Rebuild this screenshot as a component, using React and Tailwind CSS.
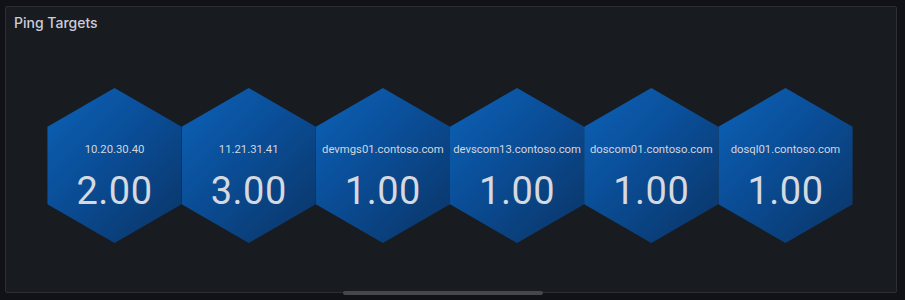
import React from "react";

const items = [
  { label: "10.20.30.40", value: "2.00" },
  { label: "11.21.31.41", value: "3.00" },
  { label: "devmgs01.contoso.com", value: "1.00" },
  { label: "devscom13.contoso.com", value: "1.00" },
  { label: "doscom01.contoso.com", value: "1.00" },
  { label: "dosql01.contoso.com", value: "1.00" },
];

function Hex({ label, value }) {
  return (
    <div className="relative w-[134.2px] h-[155px] shrink-0">
      <div className="absolute inset-0 [clip-path:polygon(50%_0,100%_25%,100%_75%,50%_100%,0_75%,0_25%)] bg-[linear-gradient(135deg,#0c62b8_0%,#0a4d96_45%,#0a3465_100%)]" />
      <div className="relative flex flex-col items-center h-full pt-[55px]">
        <div className="text-[11.3px] leading-[14px] text-[#d2d6de] whitespace-nowrap">{label}</div>
        <div className="text-[38px] leading-[40px] mt-[14px] text-[#d5d9e0] tracking-[0.5px]">{value}</div>
      </div>
    </div>
  );
}

export default function App() {
  return (
    <div className="w-[905px] h-[300px] bg-[#111217] pt-[6px] pl-[5px] font-['Roboto',sans-serif]">
      <div className="relative w-[892px] h-[287px] bg-[#181b1f] border border-[#2c2e33] rounded-[2px]">
        <div className="h-[32px] pl-[8px] pt-[7px] text-[14px] leading-[18px] font-medium text-[#ccccdc] font-['Inter',sans-serif]">
          Ping Targets
        </div>
        <div className="flex justify-center mt-[49px] pr-[2px]">
          {items.map((it) => (
            <Hex key={it.label} {...it} />
          ))}
        </div>
        <div className="absolute left-[337px] bottom-[-3px] w-[200px] h-[4px] rounded-full bg-[#45474d]" />
      </div>
    </div>
  );
}
